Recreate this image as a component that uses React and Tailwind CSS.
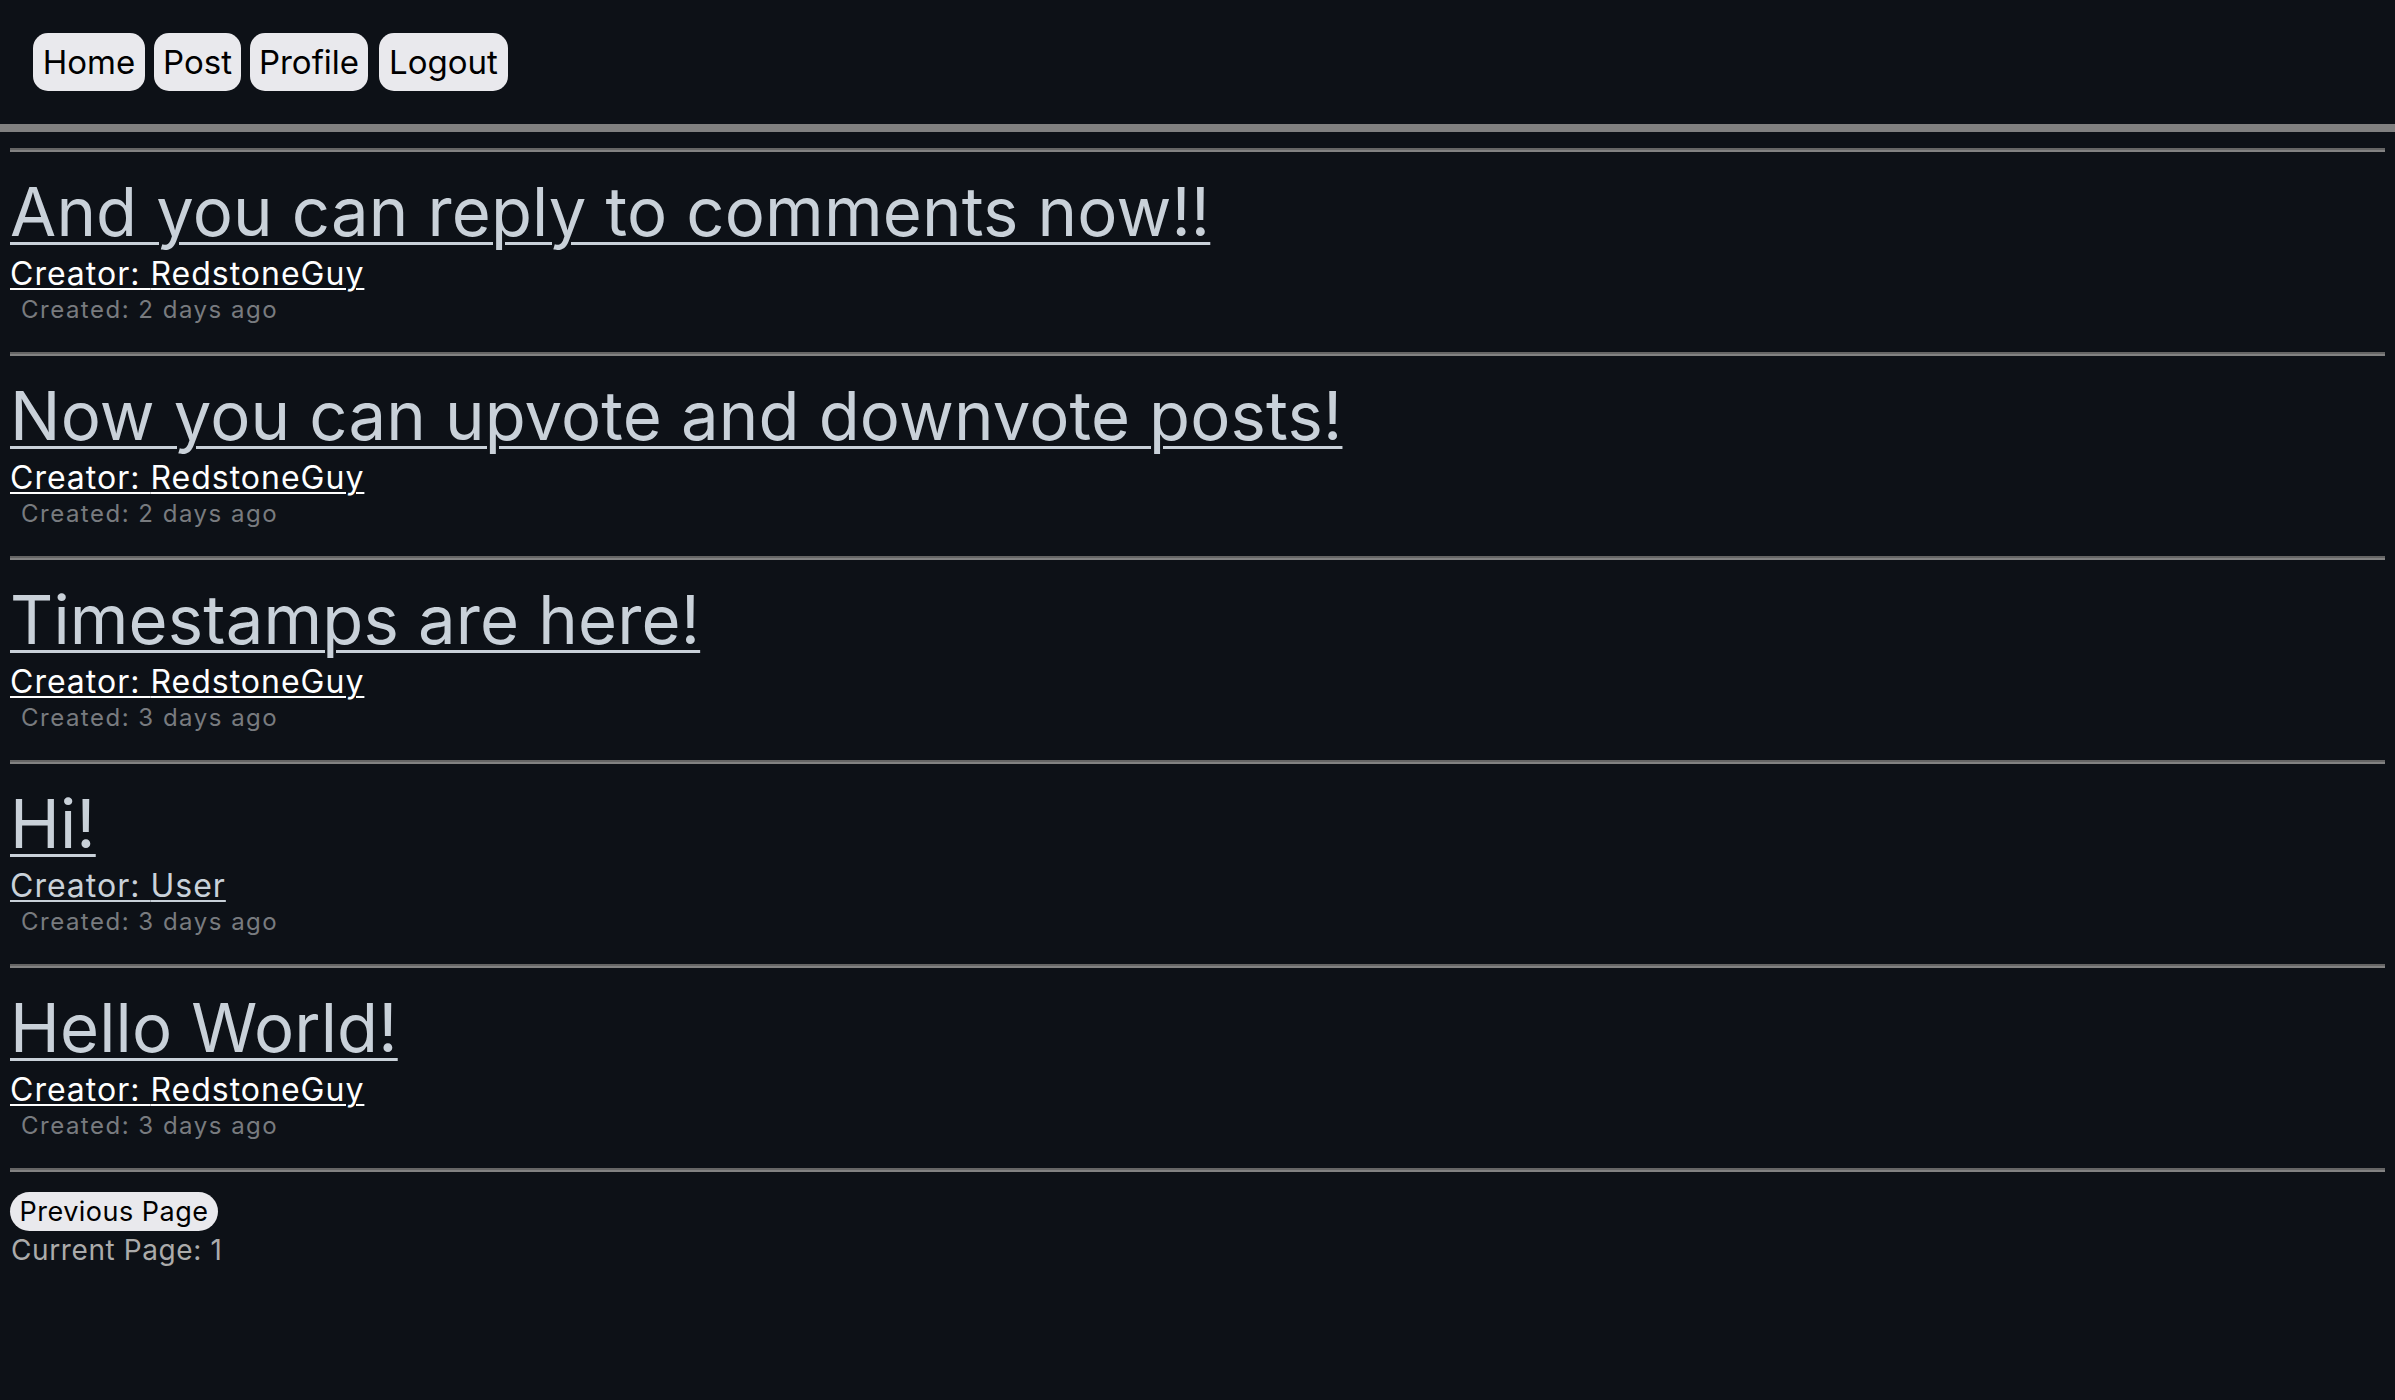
import React from "react";

const posts = [
  { title: "And you can reply to comments now!!", creator: "RedstoneGuy", created: "2 days ago", visited: true },
  { title: "Now you can upvote and downvote posts!", creator: "RedstoneGuy", created: "2 days ago", visited: true },
  { title: "Timestamps are here!", creator: "RedstoneGuy", created: "3 days ago", visited: true },
  { title: "Hi!", creator: "User", created: "3 days ago", visited: false },
  { title: "Hello World!", creator: "RedstoneGuy", created: "3 days ago", visited: true },
];

const navItems = [
  ["Home", "w-[112px]"],
  ["Post", "w-[87px]"],
  ["Profile", "w-[118px]"],
  ["Logout", "w-[129px] ml-[2px]"],
];

function Hr() {
  return <div className="h-[4px] border-t-[2px] border-[#656565] bg-[#828282]" />;
}

export default function App() {
  return (
    <div className="min-h-screen bg-[#0d1117] text-[#c9d1d9] font-['Inter','Noto_Sans',sans-serif]">
      <nav className="h-[124px] pt-[33px] pl-[33px] flex items-start gap-[9px]">
        {navItems.map(([t, w]) => (
          <button
            key={t}
            className={`${w} h-[58px] rounded-[15px] bg-[#e9e9ed] text-black text-[33px] leading-[58px] text-center`}
          >
            {t}
          </button>
        ))}
      </nav>
      <div className="h-[8px] bg-[#808080]" />
      <main className="px-[10px] pt-[16px]">
        {posts.map((p) => (
          <div key={p.title}>
            <Hr />
            <div className="h-[200px] flex flex-col items-start">
              <a
                href="#"
                className="mt-[26px] text-[67px] leading-[67px] text-[#c9d1d9] underline decoration-[3px] underline-offset-[6px] tracking-[0.15px]"
              >
                {p.title}
              </a>
              <a
                href="#"
                className={`mt-[13px] text-[32px] leading-[32px] underline decoration-[2px] underline-offset-[3px] tracking-[1px] ${
                  p.visited ? "text-white" : "text-[#c9d1d9]"
                }`}
              >
                Creator: {p.creator}
              </a>
              <div className="mt-[8px] pl-[11px] text-[24px] leading-[24px] text-[#787b7f] tracking-[1.5px]">
                Created: {p.created}
              </div>
            </div>
          </div>
        ))}
        <Hr />
        <button className="mt-[20px] block w-[208px] h-[39px] rounded-full bg-[#e9e9ed] text-black text-[27px] leading-[39px] text-center tracking-[0.5px]">
          Previous Page
        </button>
        <div className="mt-[5px] pl-[1px] text-[28px] leading-[28px] text-[#ababab] tracking-[0.6px]">
          Current Page: 1
        </div>
      </main>
    </div>
  );
}
